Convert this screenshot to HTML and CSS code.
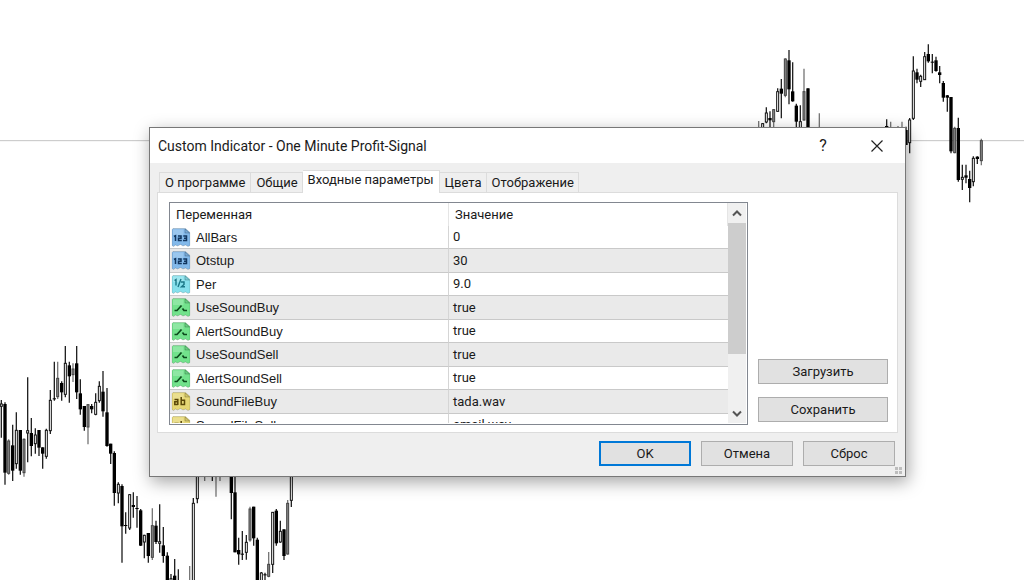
FILE: index.html
```html
<!DOCTYPE html>
<html lang="ru">
<head>
<meta charset="utf-8">
<meta name="viewport" content="width=device-width, initial-scale=1">
<title>Custom Indicator - One Minute Profit-Signal</title>
<link rel="stylesheet" href="styles.css">
</head>
<body>
<svg class="symbols" aria-hidden="true">
  <symbol id="sheet" viewBox="0 0 19 19">
    <path d="M1.5 .5H14L18.500 4.500V17.500L16.500 18.500L14 17L11.500 18L9 16.500L6 18L4 17L2 18.500L.5 17.500V1.500Z" fill="currentColor" stroke="#000" stroke-opacity=".14"/>
    <path d="M1.500 1.500H12V7H1.500Z" fill="#fff" fill-opacity=".2"/>
    <path d="M13.500 1V5H18Z" fill="#000" fill-opacity=".08" stroke="#000" stroke-opacity=".25" stroke-width=".8"/>
  </symbol>
  <symbol id="int" viewBox="0 0 19 19">
    <use href="#sheet"/>
    <path d="M2.500 8.500L4 7.700V13M6.500 8H9.500V10.300H7V12.500H10.300M11.800 8H15V12.500H11.500M12.500 10.300H15" fill="none" stroke="#12365f" stroke-width="1.500"/>
  </symbol>
  <symbol id="real" viewBox="0 0 19 19">
    <use href="#sheet"/>
    <path d="M3 5.500L4.500 4.500V10.500M9.500 4L6.500 12M9.500 7H12.500V9.500L10 11.700H13.500" fill="none" stroke="#1b7787" stroke-width="1.400"/>
  </symbol>
  <symbol id="bool" viewBox="0 0 19 19">
    <use href="#sheet"/>
    <path d="M3 12.500H5.500L10 7.500M11 10.500L12.500 12.500H15.500" fill="none" stroke="#0c4a1c" stroke-width="1.700"/>
  </symbol>
  <symbol id="str" viewBox="0 0 19 19">
    <use href="#sheet"/>
    <path d="M3 7.600H6.300V13M6.300 9.800H3.300V12.500H6.300M9.700 5V12.500H13V8.300H9.700" fill="none" stroke="#5a4708" stroke-width="1.500"/>
  </symbol>
</svg>

<svg class="chart" id="chart" viewBox="0 0 3072 1740" preserveAspectRatio="xMidYMid slice" role="img" aria-label="График">
  <line class="price" x1="0" y1="422" x2="3072" y2="422"/>
</svg>

<form class="dialog" role="dialog" aria-labelledby="title">
  <header class="titlebar">
    <h1 id="title">Custom Indicator - One Minute Profit-Signal</h1>
    <button type="button" class="help" aria-label="Справка">?</button>
    <button type="button" class="close" aria-label="Закрыть"><svg width="12" height="12" viewBox="0 0 12 12"><path d="M.5 .5L11.500 11.500M11.500 .5L.5 11.500" fill="none" stroke="#222" stroke-width="1.200"/></svg></button>
  </header>
  <div class="content">
    <nav class="tabs" role="tablist">
      <button type="button" role="tab">О программе</button>
      <button type="button" role="tab">Общие</button>
      <button type="button" role="tab" class="active" aria-selected="true">Входные параметры</button>
      <button type="button" role="tab">Цвета</button>
      <button type="button" role="tab">Отображение</button>
    </nav>
    <section class="page">
      <div class="list">
        <div class="rows">
          <table>
            <thead><tr><th>Переменная</th><th>Значение</th></tr></thead>
            <tbody>
              <tr><td class="int"><svg><use href="#int"/></svg>AllBars</td><td>0</td></tr>
              <tr><td class="int"><svg><use href="#int"/></svg>Otstup</td><td>30</td></tr>
              <tr><td class="real"><svg><use href="#real"/></svg>Per</td><td>9.0</td></tr>
              <tr><td class="bool"><svg><use href="#bool"/></svg>UseSoundBuy</td><td>true</td></tr>
              <tr><td class="bool"><svg><use href="#bool"/></svg>AlertSoundBuy</td><td>true</td></tr>
              <tr><td class="bool"><svg><use href="#bool"/></svg>UseSoundSell</td><td>true</td></tr>
              <tr><td class="bool"><svg><use href="#bool"/></svg>AlertSoundSell</td><td>true</td></tr>
              <tr><td class="str"><svg><use href="#str"/></svg>SoundFileBuy</td><td>tada.wav</td></tr>
              <tr><td class="str"><svg><use href="#str"/></svg>SoundFileSell</td><td>email.wav</td></tr>
            </tbody>
          </table>
        </div>
        <div class="scrollbar">
          <button type="button" aria-label="Вверх"><svg width="10" height="7" viewBox="0 0 10 7"><path d="M1 5.500L5 1.500L9 5.500" fill="none" stroke="#555" stroke-width="2"/></svg></button>
          <div class="track"><div class="thumb"></div></div>
          <button type="button" aria-label="Вниз"><svg width="10" height="7" viewBox="0 0 10 7"><path d="M1 1.500L5 5.500L9 1.500" fill="none" stroke="#555" stroke-width="2"/></svg></button>
        </div>
      </div>
      <div class="side">
        <button type="button" class="btn">Загрузить</button>
        <button type="button" class="btn">Сохранить</button>
      </div>
    </section>
  </div>
  <footer class="actions">
    <button type="button" class="btn default">OK</button>
    <button type="button" class="btn">Отмена</button>
    <button type="button" class="btn">Сброс</button>
  </footer>
  <svg class="grip" width="8" height="8" viewBox="0 0 8 8"><path d="M0 0H3V3H0ZM4 0H7V3H4ZM0 4H3V7H0ZM4 4H7V7H4Z" fill="#bdbdbd"/></svg>
</form>
<script src="chart.js"></script>
</body>
</html>
```
FILE: styles.css
```css
* {
  box-sizing: border-box;
}

body {
  margin: 0;
  min-height: 100vh;
  overflow: hidden;
  background: #fff;
  color: #1a1a1a;
  font: 13px/16px Roboto, "Liberation Sans", sans-serif;
}

button {
  padding: 0;
  border: 0;
  background: none;
  color: inherit;
  font: inherit;
}

.symbols {
  position: absolute;
  width: 0;
  height: 0;
}

.chart {
  position: absolute;
  inset: 0;
  width: 100%;
  height: 100%;
}

.price { stroke: #c4c4c4; stroke-width: 3; }
.wick { stroke: #222; stroke-width: 4; }
.down { fill: #000; }
.up { fill: #fff; stroke: #111; stroke-width: 3; }
.flat { fill: #888; stroke: #444; stroke-width: 3; }
.wick-flat { stroke: #777; }

.dialog {
  position: absolute;
  top: 127px;
  left: 149px;
  width: 757px;
  max-width: calc(100% - 149px);
  border: 1px solid #777;
  background: #efefef;
  box-shadow: 2px 5px 16px rgba(0, 0, 0, .36);
}

.titlebar {
  display: flex;
  align-items: center;
  height: 35px;
  padding: 0 1px 0 8px;
  background: #fff;
}

.titlebar h1 {
  flex: 1;
  margin: 0;
  font-size: 14px;
  font-weight: 400;
}

.titlebar button {
  display: flex;
  align-items: center;
  justify-content: center;
  width: 54px;
  height: 35px;
}

.titlebar .help {
  font-size: 16px;
}

.content {
  padding: 7px 7px 0;
}

.tabs {
  display: flex;
  align-items: flex-end;
  padding-left: 2px;
}

.tabs button {
  height: 20px;
  padding: 0 4px 0 5px;
  border: 1px solid #dcdcdc;
  border-bottom: 0;
  border-left: 0;
  white-space: nowrap;
}

.tabs button:first-child {
  padding: 0 5px;
  border-left: 1px solid #dcdcdc;
}

.tabs .active {
  z-index: 1;
  height: 23px;
  margin-bottom: -1px;
  padding: 0 5px 4px;
  background: #fff;
}

.page {
  display: flex;
  gap: 10px;
  padding: 9px 9px 7px 11px;
  border: 1px solid #dcdcdc;
  background: #fff;
}

.list {
  flex: 1;
  display: flex;
  height: 223px;
  padding: 0 1px 1px 0;
  border: 1px solid #828790;
}

.rows {
  flex: 1;
  overflow: hidden;
}

table {
  width: 100%;
  table-layout: fixed;
  border-collapse: separate;
  border-spacing: 0;
}

th {
  height: 23px;
  padding: 0 6px;
  border-right: 1px solid #e5e5e5;
  font-weight: 400;
  text-align: left;
}

td {
  height: 23px;
  padding: 0 4px;
  border-bottom: 1px solid #c9c9c9;
}

td:first-child {
  padding-left: 1px;
  border-right: 1px solid #d5d5d5;
  font-family: "Liberation Sans", Arial, sans-serif;
}

tr:nth-child(even) td {
  height: 24px;
  background: #eaeaea;
}

td svg {
  width: 20px;
  height: 19px;
  margin-right: 5px;
  vertical-align: -5px;
}

.int svg { color: #83b9ea; }
.real svg { color: #86e0ec; }
.bool svg { color: #72e28c; }
.str svg { color: #e6d774; }

.scrollbar {
  display: flex;
  flex-direction: column;
  width: 18px;
  background: #f0f0f0;
}

.scrollbar button {
  display: flex;
  align-items: center;
  justify-content: center;
  height: 20px;
}

.track {
  flex: 1;
}

.thumb {
  height: 73%;
  background: #cdcdcd;
}

.side {
  display: flex;
  flex-direction: column;
  justify-content: flex-end;
  gap: 13px;
  width: 130px;
  padding-bottom: 3px;
}

.btn {
  height: 25px;
  border: 1px solid #adadad;
  background: #e1e1e1;
}

.default {
  border: 2px solid #0078d7;
}

.actions {
  display: flex;
  justify-content: flex-end;
  gap: 10px;
  padding: 8px 10px 10px;
}

.actions .btn {
  width: 92px;
}

.grip {
  position: absolute;
  right: 2px;
  bottom: 1px;
}
```
FILE: chart.js
```js
// Each candle: [x, high, bodyTop, bodyBottom, low, kind]
// kind: f = falling, h = rising, g = neutral
const series = [
  { x: 0, y: 1020, candles: [
    [4,180,192,199,293,"h"],[15,187,192,398,434,"f"],[26,298,303,400,404,"g"],[38,254,316,392,423,"f"],
    [49,217,271,371,386,"h"],[61,270,270,392,404,"f"],[72,295,298,398,410,"g"],[83,112,272,279,367,"h"],
    [94,234,279,318,349,"f"],[106,265,285,311,341,"h"],[117,270,270,323,348,"f"],[128,322,322,341,386,"f"],
    [139,266,271,349,356,"h"],[151,150,181,272,282,"h"],[163,65,175,178,182,"f"],[173,65,115,170,177,"g"],
    [185,124,129,157,182,"f"],[196,18,70,163,172,"h"],[208,65,76,109,188,"f"],[219,70,87,104,126,"g"],
    [230,18,70,157,177,"f"],[241,118,160,208,224,"f"],[253,198,198,261,272,"f"],[264,192,194,261,313,"g"],
    [275,192,198,208,220,"f"],[287,160,187,223,226,"h"],[298,124,139,182,188,"h"],[309,93,155,214,230,"f"],
    [321,144,217,318,320,"f"],[332,311,311,341,372,"f"],[343,334,339,459,497,"f"],[355,427,433,459,490,"h"],
    [366,433,438,559,668,"f"],[377,517,555,558,581,"f"],[389,462,464,564,570,"h"],[400,457,495,501,533,"f"],
    [411,468,504,507,563,"f"],[422,507,511,617,618,"f"],[433,584,586,606,655,"h"],[445,579,579,648,668,"f"]
  ] },
  { x: 420, y: 1380, candles: [
    [37,145,197,292,300,"g"],[48,182,197,246,252,"f"],[59,133,245,250,278,"h"],[70,201,256,288,308,"f"],
    [82,277,287,370,380,"f"],[93,342,356,380,380,"h"],[104,297,347,380,380,"f"],[115,328,375,380,380,"f"],
    [149,318,380,400,400,"g"],[160,114,130,400,400,"h"],[172,30,30,116,130,"h"],[194,30,30,31,63,"g"],
    [217,30,30,31,63,"f"],[228,30,30,31,110,"g"],[240,30,30,31,63,"g"],[274,30,30,99,178,"f"],
    [285,30,97,277,277,"f"],[296,233,270,283,314,"f"],[307,213,281,284,300,"f"],[319,225,247,277,299,"h"],
    [330,140,147,240,245,"g"],[341,140,140,235,257,"f"],[352,233,239,370,370,"f"],[364,336,339,380,380,"h"],
    [375,338,343,346,370,"f"],[386,276,313,349,352,"g"],[398,156,157,313,339,"h"],[409,147,152,250,257,"f"],
    [421,182,214,246,248,"h"],[432,208,208,288,300,"f"],[443,120,130,282,284,"g"],[454,30,30,121,141,"h"]
  ] },
  { x: 2250, y: 90, candles: [
    [26,273,310,320,320,"g"],[38,279,281,310,310,"h"],[49,232,249,276,280,"h"],[60,244,264,271,292,"f"],
    [71,237,239,275,300,"g"],[83,175,185,244,245,"h"],[94,147,176,191,265,"f"],[106,85,87,196,202,"g"],
    [117,60,91,178,223,"f"],[128,97,184,214,215,"f"],[139,221,227,275,310,"f"],[151,226,275,310,310,"h"],
    [162,116,185,270,272,"g"],[174,175,175,310,310,"f"],[208,250,310,320,320,"g"],[410,268,288,310,310,"f"],
    [422,275,310,320,320,"g"],[444,288,310,320,320,"g"],[456,275,310,320,320,"g"],[468,290,300,345,345,"f"],
    [479,264,270,338,370,"h"],[490,79,123,265,270,"h"],[501,116,127,149,160,"f"],[512,134,139,154,171,"h"],
    [524,66,80,149,150,"h"],[535,43,72,94,98,"f"],[547,72,95,98,130,"f"],[558,80,91,123,125,"f"],
    [569,108,127,135,160,"f"],[580,153,159,203,215,"f"],[592,195,196,203,245,"f"],[603,201,201,364,370,"f"],
    [614,290,295,368,370,"g"],[625,263,294,450,455,"f"],[637,404,442,448,480,"h"],[648,404,436,443,460,"f"],
    [659,422,447,474,517,"f"],[670,379,385,455,469,"h"],[682,379,380,387,402,"f"],[694,326,332,392,406,"g"]
  ] }
];

const bodyClass = { f: "down", h: "up", g: "flat" };
const chart = document.getElementById("chart");

function add(name, attributes) {
  const node = document.createElementNS("http://www.w3.org/2000/svg", name);
  for (const key in attributes) node.setAttribute(key, attributes[key]);
  chart.append(node);
}

for (const part of series) {
  for (const [x, high, top, bottom, low, kind] of part.candles) {
    const cx = part.x + x;
    const half = kind === "f" ? 5 : 3;
    add("line", { class: kind === "g" ? "wick wick-flat" : "wick", x1: cx, x2: cx, y1: part.y + high, y2: part.y + low });
    add("rect", { class: bodyClass[kind], x: cx - half, y: part.y + top, width: half * 2, height: bottom - top });
  }
}
```
